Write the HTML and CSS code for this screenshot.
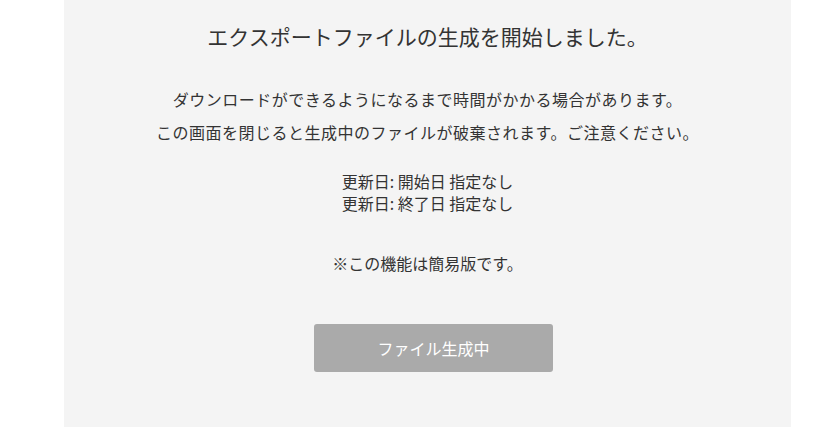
FILE: index.html
```html
<!DOCTYPE html>
<html lang="ja">
<head>
  <meta charset="UTF-8">
  <meta name="viewport" content="width=device-width, initial-scale=1.0">
  <title>エクスポート</title>
  <link rel="stylesheet" href="styles.css">
</head>
<body>
  <div class="panel">
    <h2 class="title">エクスポートファイルの生成を開始しました。</h2>
    <div class="lead">
      <p>ダウンロードができるようになるまで時間がかかる場合があります。</p>
      <p>この画面を閉じると生成中のファイルが破棄されます。ご注意ください。</p>
    </div>
    <div class="dates">
      <p>更新日: 開始日 指定なし</p>
      <p>更新日: 終了日 指定なし</p>
    </div>
    <p class="note">※この機能は簡易版です。</p>
    <div class="actions">
      <button class="button" disabled>ファイル生成中</button>
    </div>
  </div>
</body>
</html>
```

FILE: styles.css
```css
:root {
  --bg: #fff;
  --panel-bg: #f4f4f4;
  --fg: #333;
  --btn-bg: #aaa;
}
* { box-sizing: border-box; }
body {
  margin: 0;
  background: var(--bg);
  color: var(--fg);
  font-family: "Noto Sans CJK JP", "Noto Sans", sans-serif;
}
.panel {
  margin-left: 64px;
  width: 727px;
  min-height: 427px;
  padding-top: 20px;
  background: var(--panel-bg);
  text-align: center;
}
p { margin: 0; }
.title {
  margin: 0;
  font-size: 21px;
  font-weight: normal;
  line-height: 32px;
}
.lead {
  margin-top: 31px;
  font-size: 16px;
  letter-spacing: 0.5px;
  line-height: 33px;
}
.dates {
  margin-top: 21px;
  font-size: 16px;
  line-height: 22px;
}
.note {
  margin-top: 38px;
  font-size: 16px;
  line-height: 22px;
}
.actions {
  display: flex;
  justify-content: center;
  margin-top: 50px;
  padding-left: 12px;
}
.button {
  width: 239px;
  height: 48px;
  border: none;
  border-radius: 3px;
  background: var(--btn-bg);
  color: #fff;
  font-family: inherit;
  font-size: 16px;
}
```
